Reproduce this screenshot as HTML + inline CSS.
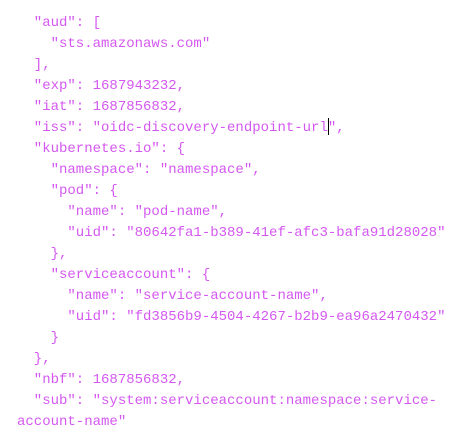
<!DOCTYPE html>
<html><head><meta charset="utf-8"><style>
html,body{margin:0;padding:0;background:#fff;width:463px;height:433px;overflow:hidden}
pre{margin:0;padding:13px 0 0 17px;font-family:"Liberation Mono",monospace;font-size:14px;line-height:21px;color:#d458f0;white-space:pre}
.cur{display:inline-block;width:1px;height:17px;background:#000;vertical-align:-4px;margin-right:-1px}
</style></head><body><pre>  "aud": [
    "sts.amazonaws.com"
  ],
  "exp": 1687943232,
  "iat": 1687856832,
  "iss": "oidc-discovery-endpoint-url<span class="cur"></span>",
  "kubernetes.io": {
    "namespace": "namespace",
    "pod": {
      "name": "pod-name",
      "uid": "80642fa1-b389-41ef-afc3-bafa91d28028"
    },
    "serviceaccount": {
      "name": "service-account-name",
      "uid": "fd3856b9-4504-4267-b2b9-ea96a2470432"
    }
  },
  "nbf": 1687856832,
  "sub": "system:serviceaccount:namespace:service-
account-name"</pre></body></html>
